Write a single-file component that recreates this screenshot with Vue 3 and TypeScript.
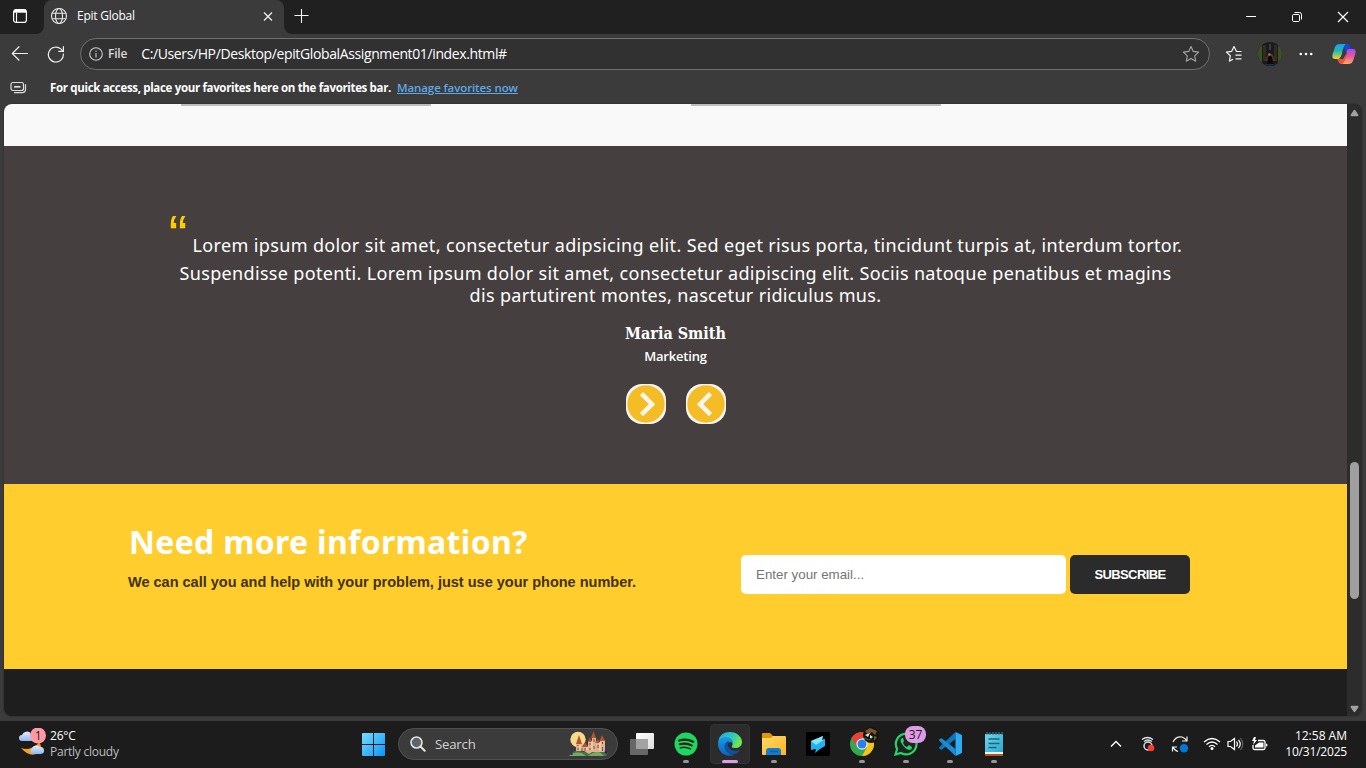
<script setup lang="ts">
interface Task { name: string; running: boolean; active?: boolean; badge?: string }

const quoteLines: string[] = [
  'Lorem ipsum dolor sit amet, consectetur adipsicing elit. Sed eget risus porta, tincidunt turpis at, interdum tortor.',
  'Suspendisse potenti. Lorem ipsum dolor sit amet, consectetur adipiscing elit. Sociis natoque penatibus et magins',
  'dis partutirent montes, nascetur ridiculus mus.',
]

const tasks: Task[] = [
  { name: 'taskview', running: false },
  { name: 'spotify', running: true },
  { name: 'edge', running: true, active: true },
  { name: 'explorer', running: true },
  { name: 'arrow', running: false },
  { name: 'chrome', running: true },
  { name: 'whatsapp', running: true, badge: '37' },
  { name: 'vscode', running: true },
  { name: 'notepad', running: true },
]
</script>

<template>
  <div class="screen">
    <header class="titlebar">
      <div class="tab-actions">
        <svg width="16" height="16" viewBox="0 0 16 16" fill="none" stroke="#fff">
          <rect x="1.6" y="1.6" width="12.8" height="12.8" rx="2.5" stroke-width="1.2" />
          <path d="M2 3.2h12" stroke-width="3" /><path d="M4.5 4.500v9.500" stroke-width="1.1" />
        </svg>
      </div>
      <div class="tab">
        <svg class="globe" width="18" height="18" viewBox="0 0 18 18" fill="none" stroke="#e8e8e8" stroke-width="1.1">
          <circle cx="9" cy="9" r="7.5" /><ellipse cx="9" cy="9" rx="3.500" ry="7.500" /><path d="M2.200 6.300h13.600M2.200 11.700h13.600" />
        </svg>
        <span class="tab-title">Epit Global</span>
        <svg class="tab-x" width="10" height="10" viewBox="0 0 10 10" stroke="#f2f2f2" stroke-width="1.200"><path d="M1 1.500l8 8M9 1.500l-8 8" /></svg>
      </div>
      <svg class="plus" width="16" height="16" viewBox="0 0 16 16" stroke="#f4f4f4" stroke-width="1.100"><path d="M7.500 1v14M.5 7.500h14" /></svg>
      <div class="win-controls">
        <svg width="12" height="12" viewBox="0 0 12 12" stroke="#fff"><path d="M1 5.500h10" /></svg>
        <svg width="12" height="12" viewBox="0 0 12 12" stroke="#fff" fill="none"><rect x="1.500" y="3.500" width="7" height="7" rx="1.200" /><path d="M3.500 1.500H8.500a2 2 0 0 1 2 2V8.500" /></svg>
        <svg width="12" height="12" viewBox="0 0 12 12" stroke="#fff" stroke-width="1.200"><path d="M1 1l10 10M11 1l-10 10" /></svg>
      </div>
    </header>

    <div class="toolbar">
      <svg class="back" width="18" height="18" viewBox="0 0 18 18" fill="none" stroke="#eee" stroke-width="1.200"><path d="M17 8.500H1.300M8.300 1.500l-7 7 7 7" /></svg>
      <svg class="reload" width="18" height="18" viewBox="0 0 18 18" fill="none" stroke="#eee" stroke-width="1.200"><path d="M16.300 8.500A7.500 7.500 0 1 1 13.800 3.900L16 6M16.400 1.300V6.300H11.300" /></svg>
      <div class="address">
        <svg width="14" height="14" viewBox="0 0 14 14" fill="none" stroke="#ccc" stroke-width="1.100"><circle cx="7" cy="7" r="6.300" /><path d="M7 6v4.500M7 3.500v1.300" /></svg>
        <span class="file">File</span>
        <span class="url">C:/Users/HP/Desktop/epitGlobalAssignment01/index.html#</span>
        <svg class="star" width="18" height="18" viewBox="0 0 18 18" fill="none" stroke="#a5a5a5" stroke-width="1.100" stroke-linejoin="round"><path d="M9 1.500l2.300 4.900 5.300.7-3.900 3.700 1 5.400L9 13.600l-4.700 2.600 1-5.400L1.400 7.100l5.300-.7z" /></svg>
      </div>
      <svg class="favs" width="18" height="18" viewBox="0 0 18 18" fill="none" stroke="#f3f3f3" stroke-width="1.200" stroke-linejoin="round"><path d="M16.500 6.500h-5L9 1.600 6.700 6.300l-5.300.8 3.900 3.700-.9 5.300 3.600-1.900M10.500 10.200h6M10.500 13.800h6" /></svg>
      <svg class="avatar" width="24" height="24" viewBox="0 0 24 24">
        <defs><clipPath id="av"><circle cx="12" cy="12" r="12" /></clipPath></defs>
        <g clip-path="url(#av)"><rect width="24" height="24" fill="#1b1b1a" /><path d="M0 3h4v18H0zM20 3h4v18h-4z" fill="#3c5122" /><path d="M5 3h3v16H5zM16 3h3v16h-3z" fill="#302b24" /><path d="M7 19l3-7h4l4 7z" fill="#59321f" /><path d="M9 24l1-9 2-2 2 2 2 9z" fill="#08090b" /><circle cx="11.500" cy="12.500" r="1.300" fill="#a47355" /><path d="M11 2h2v6h-2z" fill="#30404a" /><path d="M7 22h9v2H7z" fill="#14304f" /></g>
      </svg>
      <svg class="dots" width="14" height="4" viewBox="0 0 14 4" fill="#fff"><circle cx="1.800" cy="2" r="1.300" /><circle cx="7" cy="2" r="1.300" /><circle cx="12.200" cy="2" r="1.300" /></svg>
      <svg class="copilot" width="24" height="22" viewBox="0 0 24 22">
        <defs>
          <linearGradient id="cpa" x1="0" y1="0" x2="0" y2="1"><stop stop-color="#1e9df1" /><stop offset=".45" stop-color="#1db8b3" /><stop offset="1" stop-color="#f4d423" /></linearGradient>
          <linearGradient id="cpb" x1="0" y1="0" x2="0" y2="1"><stop stop-color="#a24af2" /><stop offset=".5" stop-color="#ee5696" /><stop offset="1" stop-color="#ffad60" /></linearGradient>
        </defs>
        <path d="M11 1h5c2 0 2 2 2.600 4H21l-7 5z" fill="#1746ce" /><path d="M5 16h6l3-5-1 10H9c-2 0-2.500-3-4-5z" fill="#f0503a" />
        <path d="M8 1h6c-2 1-3 5-4 9-1 4-2 6-5 6H3c-3 0-3-3-2-6l2-6c1-2 2-3 5-3z" fill="url(#cpa)" />
        <path d="M16 6h5c3 0 3 3 2 6l-2 6c-1 2-2 3-5 3h-6c2-1 3-4 4-8 1-4 1-7 2-7z" fill="url(#cpb)" />
      </svg>
    </div>

    <div class="favbar">
      <svg width="17" height="13" viewBox="0 0 17 13" fill="none" stroke="#ddd" stroke-width="1.200"><rect x="1" y="1.500" width="12.500" height="8" rx="2" /><path d="M4 5.800h6.500" stroke-width="1.700" /><path d="M4 11.600h8.500a3 3 0 0 0 3-3V3.200" /></svg>
      <span class="fav-text">For quick access, place your favorites here on the favorites bar.</span>
      <a class="fav-link">Manage favorites now</a>
    </div>

    <div class="viewport">
      <main class="page">
        <section class="cards-end"><i></i><i></i></section>
        <section class="testimonial">
          <div class="q q1"><span class="mark">“</span><span>{{ quoteLines[0] }}</span></div>
          <div class="q q2">{{ quoteLines[1] }}</div>
          <div class="q q3">{{ quoteLines[2] }}</div>
          <div class="author">Maria Smith</div>
          <div class="role">Marketing</div>
          <div class="arrows">
            <button class="nav"><svg width="40" height="40" viewBox="0 0 40 40" fill="none" stroke="#f8f5ed" stroke-width="4.500"><circle cx="20" cy="20" r="18.700" fill="#f4bd25" stroke="none" /><path d="M15.500 9.700L26 20.200 15.500 30.700" /></svg></button>
            <button class="nav"><svg width="40" height="40" viewBox="0 0 40 40" fill="none" stroke="#f8f5ed" stroke-width="4.500"><circle cx="20" cy="20" r="18.700" fill="#f4bd25" stroke="none" /><path d="M24.500 9.700L14 20.200 24.500 30.700" /></svg></button>
          </div>
        </section>
        <section class="contact">
          <div class="copy"><h2>Need more information?</h2><p>We can call you and help with your problem, just use your phone number.</p></div>
          <form class="form" @submit.prevent><input type="text" placeholder="Enter your email..." /><button>SUBSCRIBE</button></form>
        </section>
        <footer class="foot"></footer>
      </main>
      <div class="scrollbar">
        <svg width="10" height="8" viewBox="0 0 10 8" fill="#a0a0a0"><path d="M5 .5q.8 0 1.300.9l3 4.600q.5 1.500-1 1.500H1.700Q.2 7.500.7 6l3-4.600Q4.200.5 5 .5z" /></svg>
        <i class="thumb"></i>
        <svg width="10" height="8" viewBox="0 0 10 8" fill="#a0a0a0"><path d="M5 7.500q.8 0 1.300-.9l3-4.600Q9.800.5 8.300.5H1.700Q.2.500.7 2l3 4.600q.5.9 1.300.9z" /></svg>
      </div>
    </div>

    <footer class="taskbar">
      <div class="weather">
        <svg width="30" height="30" viewBox="0 0 30 30">
          <defs><linearGradient id="cl" x1="0" y1="0" x2="0" y2="1"><stop stop-color="#e3f0ff" /><stop offset="1" stop-color="#8eb4ed" /></linearGradient></defs>
          <path d="M3 20q6 2 10 0 7-3 8-6 5 7-1 11-8 5-17-5z" fill="#f7a11d" />
          <path d="M4 13a3 3 0 0 1 0-6 5 5 0 0 1 9-1 4 4 0 0 1 2 7z" fill="url(#cl)" /><path d="M14 26a3.500 3.500 0 0 1 0-6 5 5 0 0 1 8-1 3.500 3.500 0 0 1 1 7z" fill="url(#cl)" />
          <circle cx="20" cy="7.500" r="8" fill="#ff99a4" />
          <text x="20.300" y="11.700" text-anchor="middle" font-size="12" fill="#222">1</text>
        </svg>
        <div><div class="temp">26°C</div><div class="cond">Partly cloudy</div></div>
      </div>

      <svg class="start" width="23" height="23" viewBox="0 0 23 23"><defs><linearGradient id="wi" x1="0" y1="0" x2="1" y2="1"><stop stop-color="#78dcff" /><stop offset="1" stop-color="#0994f7" /></linearGradient></defs><path d="M0 1q0-1 1-1h10v11H0zM12 0h10q1 0 1 1v10H12zM0 12h11v11H1q-1 0-1-1zM12 12h11v10q0 1-1 1H12z" fill="url(#wi)" /></svg>

      <div class="search">
        <svg width="16" height="16" viewBox="0 0 16 16" fill="#606468" stroke="#e2e2e2" stroke-width="1.600"><circle cx="6.500" cy="6.500" r="5.500" /><path d="M10.500 10.500l4.200 4.200" stroke-linecap="round" stroke-width="2" /></svg>
        <span>Search</span>
        <svg class="castle" width="42" height="28" viewBox="0 0 42 28">
          <circle cx="10" cy="9.500" r="7.700" fill="#f8da8c" /><path d="M1 26q4-6 11-5 9 3 13-1 9-3 15 3l-2 3z" fill="#407747" />
          <path d="M8 14h6v2h6v-5h4V8h4v4h4v-2h5v12H24l-3 2-5-3H8z" fill="#dfb292" />
          <path d="M8 14l3-9 3 9zM23 8l2.500-7L28 8zM31.500 11l2.500-6 3 6zM14 17l3-5 3 5zM27 13l3-4 2 4zM20 12l2-5 2 5z" fill="#b5532c" />
          <path d="M10 15v1M10 18v2M14 18v3M17 18v3M22 13v2M26 9v3M26 16v3M30 15v3M34.500 12v2M34.500 17v4M22 18v2" stroke="#7c4b3d" stroke-width="1" />
          <path d="M12 15v5M24 11v9M32 12v9M19 17v3" stroke="#fae0bc" /><path d="M1 26q6-5 13-3l4 3zM20 26q8-6 13-3l3 3z" fill="#78a963" /><path d="M3 25l1-6v6M39 24l-1-8-1 7" stroke="#48315d" />
        </svg>
      </div>

      <div class="tasks">
        <div v-for="t in tasks" :key="t.name" class="task" :class="{ active: t.active }">
          <svg v-if="t.name === 'taskview'" width="24" height="24" viewBox="0 0 24 24"><defs><linearGradient id="tv" x1="0" y1="0" x2="1" y2="1"><stop stop-color="#fff" /><stop offset="1" stop-color="#ddd" /></linearGradient></defs><rect x="6" y="1" width="18" height="16" rx="1" fill="url(#tv)" /><rect x="0" y="7" width="18" height="16" rx="1" fill="#707070" fill-opacity=".9" /><path d="M6 7h12v10H6z" fill="#a2a2a2" /></svg>
          <svg v-else-if="t.name === 'spotify'" width="24" height="24" viewBox="0 0 24 24"><circle cx="12" cy="12" r="11.500" fill="#1ed760" /><g fill="none" stroke="#17231b" stroke-linecap="round"><path d="M5.200 8.500q7.500-2.200 14 1.300" stroke-width="2.300" /><path d="M5.800 12.300q6.700-1.800 12 1.200" stroke-width="2" /><path d="M6.400 15.800q5.500-1.400 10 1.100" stroke-width="1.600" /></g></svg>
          <svg v-else-if="t.name === 'edge'" width="24" height="24" viewBox="0 0 24 24">
            <defs><linearGradient id="ea" x1="0" x2="1" y2=".4"><stop stop-color="#23a7e8" /><stop offset=".6" stop-color="#2cc9bc" /><stop offset="1" stop-color="#70e54b" /></linearGradient><linearGradient id="eb" x2="0" y2="1"><stop stop-color="#1b9be4" /><stop offset="1" stop-color="#0b60be" /></linearGradient></defs>
            <path d="M.3 10C1 3 6 0 12 0c7 0 12 5 12 10 0 4-3 6-7 6-3 0-4-1-3-2 3-5-6-10-13.700-4z" fill="url(#ea)" />
            <path d="M0 12c0-5 4-7 8-7 4 0 7 3 7 6-3-2-7 0-7 4 0 5 4 8 8 8-7 3-16-2-16-11z" fill="url(#eb)" />
            <path d="M11 9c-5 1-6 7-2 11s10 3 13-2c-5 2-12 0-12-5 0-2 1-3 1-4z" fill="#11509b" />
          </svg>
          <svg v-else-if="t.name === 'explorer'" width="24" height="24" viewBox="0 0 24 24"><defs><linearGradient id="fo" x2="1" y2="1"><stop stop-color="#ffd96b" /><stop offset="1" stop-color="#ffb51e" /></linearGradient></defs><path d="M0 2q0-1 1-1h7l3 3v5H0z" fill="#df9800" /><path d="M0 6h9l2-2h12q1 0 1 1v18H1q-1 0-1-1z" fill="url(#fo)" /><path d="M4 23v-4q0-3 3-3h9q3 0 3 3v4z" fill="#137bd0" /><path d="M8 19.500h8" stroke="#0962ab" stroke-width="1.500" /></svg>
          <svg v-else-if="t.name === 'arrow'" width="24" height="24" viewBox="0 0 24 24"><rect width="24" height="24" rx="2" fill="#000" /><path d="M5 9l12-5-1 4 3-1v7l-5 3-5 4 1-4-5 1z" fill="#20b3ed" /><path d="M5 9l12-5-1 4 3-1-9 6z" fill="#85e3ff" /></svg>
          <svg v-else-if="t.name === 'chrome'" class="wide" width="30" height="30" viewBox="0 0 30 30">
            <circle cx="12" cy="17" r="12" fill="#32a852" /><path d="M1.600 11A12 12 0 0 1 22.400 11H12L7 20z" fill="#e84335" /><path d="M22.400 11A12 12 0 0 1 12 29l5-9-5-9z" fill="#fbc116" /><circle cx="12" cy="17" r="5.600" fill="#f5f8ff" /><circle cx="12" cy="17" r="4.500" fill="#287ff0" />
            <circle cx="21" cy="8" r="8" fill="#171611" /><path d="M15 4l5-3 7 3-2 4-3-3-4 3zM24 9l3 1-3 4z" fill="#7e5430" /><path d="M15 8l5-2-2 4zM20 8l3 2-3 2z" fill="#d5ece1" /><path d="M14 11l5 2 3-2" stroke="#397354" />
          </svg>
          <svg v-else-if="t.name === 'whatsapp'" width="24" height="24" viewBox="0 0 24 24"><path d="M1.500 22.500l1.600-5.500A10.300 10.300 0 1 1 7 21z" fill="#202421" stroke="#25d366" stroke-width="2.200" /><path d="M8 6q-3 2 0 6 3 5 7 6 3 0 3-3l-3-2-2 2q-3-1-4-4l1-2-1-3z" fill="#25d366" /></svg>
          <svg v-else-if="t.name === 'vscode'" width="24" height="24" viewBox="0 0 24 24"><path d="M1 15.500L17.500 0v7L4 17.500Q3 18 2.200 17.300L1 16.200q-.4-.4 0-.7z" fill="#0879bf" /><path d="M1 8.500q-.4-.4 0-.7l1.200-1.100Q3 6 4 6.500L17.500 17v7z" fill="#188dd6" /><path d="M17.500 0L24 3v18l-6.500 3z" fill="#2bacf3" /></svg>
          <svg v-else width="24" height="24" viewBox="0 0 24 24"><defs><linearGradient id="no" x2="1" y2="1"><stop stop-color="#72d6ec" /><stop offset="1" stop-color="#28a5cc" /></linearGradient></defs><path d="M3 2h18v20H3z" fill="url(#no)" /><path d="M3 20h18v2H3z" fill="#f3f0ec" /><path d="M3 22h18v2H3z" fill="#ae5918" /><path d="M6.500 7h11M6.500 11.500h11M6.500 15.500h8" stroke="#146783" stroke-width="1.700" /><path d="M5 0v3M8 0v3M11 0v3M14 0v3M17 0v3M20 0v3" stroke="#387d91" stroke-width="1.200" /></svg>
          <b v-if="t.badge" class="badge">{{ t.badge }}</b>
          <i v-if="t.running" class="dot"></i>
        </div>
      </div>

      <div class="tray">
        <svg width="12" height="8" viewBox="0 0 12 8" fill="none" stroke="#fff" stroke-width="1.400"><path d="M1 6.500l5-5 5 5" /></svg>
        <svg width="14" height="16" viewBox="0 0 14 16" fill="none" stroke="#dce5ec" stroke-width="1.400"><path d="M1 3.500q5.500-4 11 0M3 5.500q4-3 8 0" /><circle cx="7" cy="10" r="4" /><circle cx="10" cy="12" r="3.300" fill="#ff3b30" stroke="none" /></svg>
        <svg width="18" height="18" viewBox="0 0 18 18" fill="none" stroke="#eee" stroke-width="1.200"><path d="M2 7q3-6 9-5 3 1 5 4M16 1.500V6h-5M1.500 16.500V12H6M2 12q1.500 3.500 5 4.500" /><circle cx="13" cy="13.200" r="4.200" fill="#0078d7" stroke="none" /></svg>
        <svg width="18" height="14" viewBox="0 0 18 14" fill="none" stroke="#fff" stroke-width="1.300"><path d="M1 5Q9-2 17 5M3.500 7.500q5.500-5 11 0M6 9.800q3-2.800 6 0" /><circle cx="9" cy="11.500" r="1.500" fill="#fff" stroke="none" /></svg>
        <svg width="17" height="14" viewBox="0 0 17 14" fill="none" stroke="#fff" stroke-width="1.200"><path d="M1 4.500h2.500l4-3v11l-4-3H1zM9.500 4.500q2 2.500 0 5M11.500 2.800q3.500 4.200 0 8.400" /><path d="M13.500 1q4.500 6 0 12" stroke="#646464" /></svg>
        <svg width="17" height="14" viewBox="0 0 17 14"><path d="M2 8v3q0 1.500 1.500 1.500h9q1.500 0 1.500-1.500V5q0-1.500-1.500-1.500H7" fill="none" stroke="#fff" stroke-width="1.300" /><path d="M4 10.500V8.500l4-3h4.500v5zM15 6.500q1.500 0 1.500 1.500t-1.500 1.500z" fill="#fff" /><path d="M3 0L1 4h2L2 8l4-5H4L5 0z" fill="#fff" /></svg>
      </div>
      <div class="clock"><div class="time">12:58 AM</div><div class="date">10/31/2025</div></div>
    </footer>
  </div>
</template>

<style>
html, body { margin: 0; overflow: hidden; background: #3b3b3b; }
</style>

<style scoped>
* { box-sizing: border-box; }
svg { display: block; flex: none; }
.screen { width: 1366px; height: 768px; overflow: hidden; display: flex; flex-direction: column; background: #3b3b3b; color: #fff; font-family: "Open Sans", "Noto Sans", sans-serif; font-size: 12px; white-space: nowrap; }
.titlebar { height: 34px; flex: none; display: flex; align-items: center; background: linear-gradient(#3b3b3b, #3b3b3b) 36px 26px / 256px 8px no-repeat #202020; }
.tab-actions { width: 44px; height: 34px; padding: 8px 0 0 12px; border-radius: 0 0 8px 0; background: #202020; }
.tab { width: 240px; height: 34px; display: flex; align-items: center; padding: 0 11px 2px 6px; border-radius: 8px 8px 0 0; background: #3b3b3b; }
.tab-title { margin-left: 9px; padding-bottom: 1px; letter-spacing: -.25px; }
.tab-x { margin-left: auto; }
.plus { width: 26px; height: 34px; padding: 8px 0 10px 10px; border-radius: 0 0 0 8px; background: #202020; }
.win-controls { margin-left: auto; padding-right: 17px; display: flex; gap: 34px; }
.toolbar { height: 40px; flex: none; display: flex; align-items: center; }
.back { margin-left: 11px; }
.reload { margin-left: 18px; }
.address { width: 1130px; height: 32px; margin-left: 15px; padding: 0 9px 0 8px; display: flex; align-items: center; border: 1px solid #707070; border-radius: 16px; background: #313131; }
.file { margin-left: 5px; padding-bottom: 1px; font-weight: 600; letter-spacing: -.2px; color: #d8d8d8; }
.url { margin-left: 14px; padding-bottom: 1px; font-size: 14px; letter-spacing: -.38px; }
.star { margin-left: auto; }
.favs { margin-left: 15px; }
.avatar { margin-left: 15px; }
.dots { margin-left: 17px; }
.copilot { margin-left: 19px; }
.favbar { height: 30px; flex: none; display: flex; align-items: center; padding: 0 0 3px 10px; font-size: 11.500px; font-weight: 700; }
.fav-text { margin-left: 23px; letter-spacing: -.335px; }
.fav-link { margin-left: 6px; color: #5ea9e6; text-decoration: underline; font-weight: 600; letter-spacing: -.1px; }
.viewport { width: 1358px; height: 612px; flex: none; margin-left: 4px; display: flex; overflow: hidden; border-radius: 8px; background: #2c2c2c; box-shadow: 0 0 2px #252525; }
.page { width: 1343px; }
.cards-end { height: 42px; padding-left: 177px; display: flex; gap: 260px; background: #f9f9f9; }
.cards-end i { width: 250px; height: 2px; background: #bdbdbd; }
.testimonial { height: 338px; padding-top: 67px; background: #463f3f; text-align: center; }
.q { font-family: "Noto Sans", sans-serif; font-size: 18px; letter-spacing: .34px; }
.q1 { height: 47px; line-height: 64px; display: flex; justify-content: center; letter-spacing: .365px; }
.mark { margin-right: 5px; color: #fc0; font: 56px/44px "Liberation Sans", Arial, sans-serif; letter-spacing: 0; }
.q2 { height: 26px; line-height: 26px; }
.q3 { height: 21px; line-height: 18px; }
.author { margin-top: 15px; font: 700 16px/24px "DejaVu Serif Condensed", "DejaVu Serif", serif; }
.role { height: 22px; font: 600 13px/22px "Open Sans", sans-serif; letter-spacing: -.2px; margin-top: -1px; }
.arrows { margin-top: 17px; display: flex; justify-content: center; gap: 20px; }
.nav { width: 40px; height: 40px; padding: 0; border: 0; border-radius: 16px; background: #f6f5f1; overflow: hidden; }
.contact { height: 185px; display: flex; background: #ffcd2d; }
.copy { width: 737px; padding: 35px 0 0 124px; }
.copy h2 { margin: 0; padding-left: 1px; font: 700 32px/46px "Noto Sans", sans-serif; letter-spacing: .3px; }
.copy p { margin: 7px 0 0; color: #3f320d; font: 700 14.5px/20px "Liberation Sans", Arial, sans-serif; }
.form { padding-top: 71px; display: flex; gap: 4px; }
.form input { width: 325px; height: 39px; padding: 0 15px; border: 0; border-radius: 5px; background: #fff; font: 13.333px "Liberation Sans", Arial, sans-serif; }
.form input::placeholder { color: #757575; opacity: 1; }
.form button { width: 120px; height: 39px; padding: 0; border: 0; border-radius: 5px; background: #2b2b2b; color: #fff; font: 700 13px "Liberation Sans", Arial, sans-serif; letter-spacing: -.6px; }
.foot { height: 47px; background: #1e1e1e; }
.scrollbar { width: 15px; display: flex; flex-direction: column; align-items: center; padding: 5px 0 3px; background: #2c2c2c; }
.scrollbar svg { width: 9px; }
.thumb { width: 9px; height: 137px; margin: 345px 0 auto; border-radius: 5px; background: #9f9f9f; }
.taskbar { height: 47px; margin-top: auto; padding-bottom: 1px; flex: none; display: flex; align-items: center; background: #1c1c1c; }
.weather { width: 361px; padding-left: 18px; display: flex; gap: 2px; line-height: 16px; }
.temp { letter-spacing: -.2px; }
.cond { color: #bebebe; letter-spacing: -.25px; }
.start { margin: 1px 0 0 1px; }
.search { width: 220px; height: 32px; margin-left: 13px; padding: 0 7px 0 11px; display: flex; align-items: center; border: 1px solid #505050; border-radius: 16px; background: #3b3b3b; color: #d2d2d2; font-size: 13.200px; }
.search span { margin-left: 9px; padding-bottom: 1px; letter-spacing: -.2px; }
.castle { margin-left: auto; }
.tasks { margin-left: 4px; display: flex; gap: 4px; }
.task { position: relative; width: 40px; height: 40px; display: flex; align-items: center; justify-content: center; border-radius: 4px; }
.task.active { background: #2c2c2c; border: 1px solid #333; }
.wide { margin: -5px 0 0 6px; }
.dot { position: absolute; left: 17px; bottom: 1px; width: 6px; height: 3px; border-radius: 2px; background: #969696; }
.active .dot { left: 11px; bottom: 0; width: 16px; background: #df9be5; }
.badge { position: absolute; left: 19px; top: 2px; width: 21px; height: 17px; border-radius: 8px; background: #df9be5; color: #222; font: 400 12px/17px "Open Sans", sans-serif; text-align: center; }
.tray { margin-left: auto; display: flex; align-items: center; }
.tray svg:nth-child(2) { margin-left: 19px; }
.tray svg:nth-child(3) { margin-left: 16px; }
.tray svg:nth-child(4) { margin-left: 14px; }
.tray svg:nth-child(5) { margin-left: 6px; }
.tray svg:nth-child(6) { margin-left: 7px; }
.clock { width: 98px; flex: none; padding-right: 19px; line-height: 16px; display: flex; flex-direction: column; align-items: flex-end; }
.date { letter-spacing: -.2px; }
</style>
